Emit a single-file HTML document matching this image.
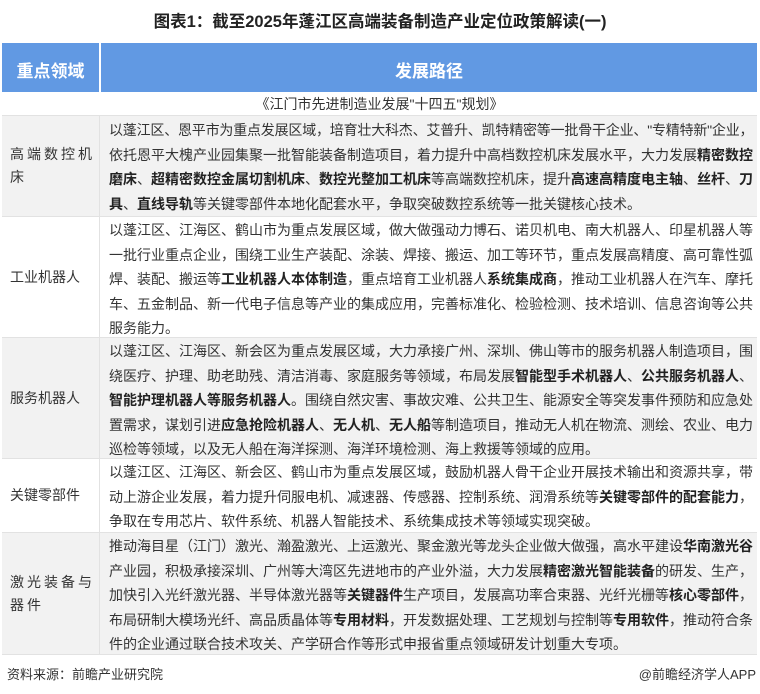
<!DOCTYPE html>
<html><head><meta charset="utf-8"><style>
*{margin:0;padding:0;box-sizing:border-box}
body{width:760px;height:694px;background:#fff;font-family:"Liberation Sans","Noto Sans CJK SC",sans-serif;color:#333;position:relative;overflow:hidden}
.title{position:absolute;top:8px;left:0;width:760px;text-align:center;font-size:16.5px;font-weight:bold;color:#222}
.hdr{position:absolute;top:43px;height:49px;background:#6199e3;color:#fff;font-size:17px;line-height:57px;font-weight:bold;text-align:center}
.sub{position:absolute;top:92px;left:2px;width:755px;height:24px;line-height:24px;text-align:center;font-size:14px;background:#fff;border-bottom:1px solid #e2e2e2}
.row{position:absolute;left:2px;width:755px;border-bottom:1px solid #e2e2e2}
.g{background:#f2f2f2}
.l{position:absolute;left:0;top:0;width:98px;height:100%;display:flex;align-items:center;padding-left:8px;font-size:14px;line-height:23px;border-right:1px solid #e2e2e2}
.r{position:absolute;left:107px;width:638px;font-size:14px;line-height:24.5px}
.r div{text-align:justify;text-align-last:justify;white-space:nowrap;overflow:visible}
.r div.e{text-align-last:left}
b{font-weight:bold;color:#222}
.foot{position:absolute;top:664px;font-size:13px;color:#333}
</style></head><body>
<div class="title">图表1：截至2025年蓬江区高端装备制造产业定位政策解读(一)</div>
<div class="hdr" style="left:2px;width:97px">重点领域</div>
<div class="hdr" style="left:101px;width:656px">发展路径</div>
<div class="sub">《江门市先进制造业发展"十四五"规划》</div>

<div class="row g" style="top:116px;height:101px">
<div class="l" style="letter-spacing:3px">高端数控机<br>床</div>
<div class="r" style="top:2px">
<div style="letter-spacing:-0.2px">以蓬江区、恩平市为重点发展区域，培育壮大科杰、艾普升、凯特精密等一批骨干企业、"专精特新"企业，</div>
<div>依托恩平大槐产业园集聚一批智能装备制造项目，着力提升中高档数控机床发展水平，大力发展<b>精密数控</b></div>
<div><b>磨床</b>、<b>超精密数控金属切割机床</b>、<b>数控光整加工机床</b>等高端数控机床，提升<b>高速高精度电主轴</b>、<b>丝杆</b>、<b>刀</b></div>
<div class="e"><b>具</b>、<b>直线导轨</b>等关键零部件本地化配套水平，争取突破数控系统等一批关键核心技术。</div>
</div></div>

<div class="row" style="top:217px;height:121px">
<div class="l">工业机器人</div>
<div class="r" style="top:1px">
<div>以蓬江区、江海区、鹤山市为重点发展区域，做大做强动力博石、诺贝机电、南大机器人、印星机器人等</div>
<div>一批行业重点企业，围绕工业生产装配、涂装、焊接、搬运、加工等环节，重点发展高精度、高可靠性弧</div>
<div>焊、装配、搬运等<b>工业机器人本体制造</b>，重点培育工业机器人<b>系统集成商</b>，推动工业机器人在汽车、摩托</div>
<div>车、五金制品、新一代电子信息等产业的集成应用，完善标准化、检验检测、技术培训、信息咨询等公共</div>
<div class="e">服务能力。</div>
</div></div>

<div class="row g" style="top:338px;height:121px">
<div class="l">服务机器人</div>
<div class="r" style="top:1px">
<div>以蓬江区、江海区、新会区为重点发展区域，大力承接广州、深圳、佛山等市的服务机器人制造项目，围</div>
<div>绕医疗、护理、助老助残、清洁消毒、家庭服务等领域，布局发展<b>智能型手术机器人</b>、<b>公共服务机器人</b>、</div>
<div><b>智能护理机器人等服务机器人</b>。围绕自然灾害、事故灾难、公共卫生、能源安全等突发事件预防和应急处</div>
<div>置需求，谋划引进<b>应急抢险机器人</b>、<b>无人机</b>、<b>无人船</b>等制造项目，推动无人机在物流、测绘、农业、电力</div>
<div class="e">巡检等领域，以及无人船在海洋探测、海洋环境检测、海上救援等领域的应用。</div>
</div></div>

<div class="row" style="top:459px;height:74px">
<div class="l">关键零部件</div>
<div class="r" style="top:1px">
<div>以蓬江区、江海区、新会区、鹤山市为重点发展区域，鼓励机器人骨干企业开展技术输出和资源共享，带</div>
<div>动上游企业发展，着力提升伺服电机、减速器、传感器、控制系统、润滑系统等<b>关键零部件的配套能力</b>，</div>
<div class="e">争取在专用芯片、软件系统、机器人智能技术、系统集成技术等领域实现突破。</div>
</div></div>

<div class="row g" style="top:533px;height:122px">
<div class="l" style="letter-spacing:3px">激光装备与<br>器件</div>
<div class="r" style="top:1px">
<div>推动海目星（江门）激光、瀚盈激光、上运激光、聚金激光等龙头企业做大做强，高水平建设<b>华南激光谷</b></div>
<div>产业园，积极承接深圳、广州等大湾区先进地市的产业外溢，大力发展<b>精密激光智能装备</b>的研发、生产，</div>
<div>加快引入光纤激光器、半导体激光器等<b>关键器件</b>生产项目，发展高功率合束器、光纤光栅等<b>核心零部件</b>，</div>
<div>布局研制大模场光纤、高品质晶体等<b>专用材料</b>，开发数据处理、工艺规划与控制等<b>专用软件</b>，推动符合条</div>
<div class="e">件的企业通过联合技术攻关、产学研合作等形式申报省重点领域研发计划重大专项。</div>
</div></div>

<div class="foot" style="left:7px">资料来源：前瞻产业研究院</div>
<div class="foot" style="right:4px">@前瞻经济学人APP</div>
</body></html>
